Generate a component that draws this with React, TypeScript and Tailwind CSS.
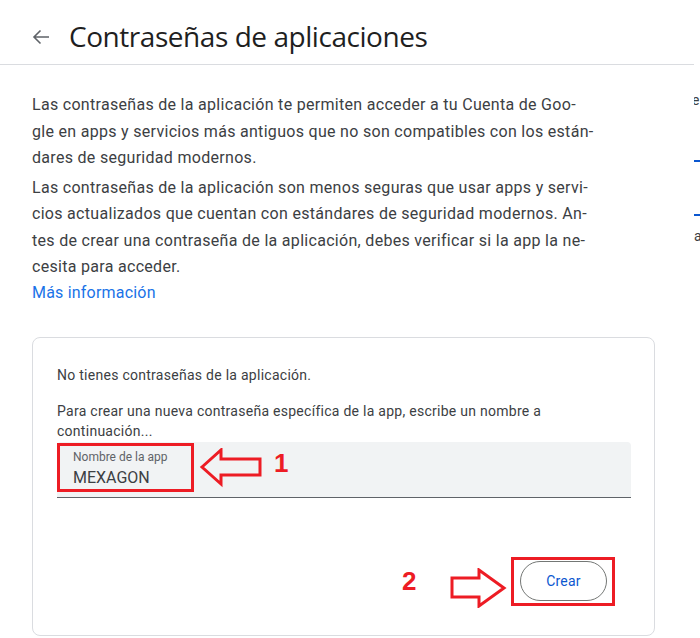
import React from "react";

const body = { fontFamily: "Roboto, 'Noto Sans', Arial, sans-serif" };
const title = { fontFamily: "'Open Sans', Roboto, Arial, sans-serif" };
const mark = { fontFamily: "Arial, 'Liberation Sans', sans-serif" };

export default function App() {
  return (
    <div className="flex w-[700px] h-[638px] overflow-hidden bg-white" style={body}>
      <div className="w-[694px] shrink-0">
        {/* Header */}
        <div className="h-[65px] border-b border-[#dadce0] flex items-center pl-[29px] pt-[10px]">
          <svg width="24" height="24" viewBox="0 0 24 24" className="shrink-0">
            <path d="M20 12H5.5M11.5 5.5L5 12l6.5 6.5" fill="none" stroke="#5f6368" strokeWidth="1.6" />
          </svg>
          <h1 className="ml-[16px] text-[28px] leading-[36px] text-[#1f1f1f] tracking-[-0.45px] -mt-[2px]" style={title}>
            Contraseñas de aplicaciones
          </h1>
        </div>

        {/* Content */}
        <div className="pl-[32px] pr-[20px] pt-[27px] text-[16px] leading-[26.5px] tracking-[0.3px] text-[#3c4043]">
          <p>
            Las contraseñas de la aplicación te permiten acceder a tu Cuenta de Goo-
            <br />
            gle en apps y servicios más antiguos que no son compatibles con los están-
            <br />
            dares de seguridad modernos.
          </p>
          <p className="mt-[3px]">
            Las contraseñas de la aplicación son menos seguras que usar apps y servi-
            <br />
            cios actualizados que cuentan con estándares de seguridad modernos. An-
            <br />
            tes de crear una contraseña de la aplicación, debes verificar si la app la ne-
            <br />
            cesita para acceder.
          </p>
          <a className="block text-[#1a73e8] leading-[24px] tracking-[0.2px]">Más información</a>

          {/* Card */}
          <div className="relative mt-[32px] w-[623px] h-[299px] border border-[#dadce0] rounded-[8px] pl-[24px] pr-[23px] pt-[27px] text-[14px] leading-[20px] tracking-[0.27px] text-[#3c4043]">
            <p>No tienes contraseñas de la aplicación.</p>
            <p className="mt-[16px]">
              Para crear una nueva contraseña específica de la app, escribe un nombre a
              <br />
              continuación...
            </p>
            <div className="mt-[1px] h-[56px] bg-[#f1f3f4] rounded-t-[4px] border-b border-[#5f6368] pl-[16px] pt-[8px] tracking-normal">
              <div className="text-[12px] leading-[14px] text-[#5f6368]">Nombre de la app</div>
              <div className="mt-[4px] text-[16px] leading-[20px] text-[#3c4043]">MEXAGON</div>
            </div>
            <div className="flex justify-end pr-[24px] mt-[63px]">
              <button className="w-[87px] h-[40px] rounded-full border border-[#747775] text-[#0b57d0] text-[14px] tracking-[0.2px]">
                Crear
              </button>
            </div>

            {/* Annotation 1 */}
            <div className="absolute left-[24px] top-[105px] w-[137px] h-[49px] border-[3px] border-[#ed1c24]" />
            <svg className="absolute left-[166px] top-[110px]" width="66" height="40" viewBox="0 0 66 40">
              <polygon
                points="3,19 22,2 22,11 61,11 61,27 22,27 22,36"
                fill="none"
                stroke="#ed1c24"
                strokeWidth="3"
              />
            </svg>
            <div className="absolute left-[241px] top-[110px] text-[26px] leading-[30px] font-bold text-[#ed1c24]" style={mark}>
              1
            </div>

            {/* Annotation 2 */}
            <div className="absolute left-[478px] top-[219px] w-[104px] h-[49px] border-[3px] border-[#ed1c24]" />
            <svg className="absolute left-[416px] top-[230px]" width="60" height="40" viewBox="0 0 60 40">
              <polygon
                points="3,10 30,10 30,2 55,20 30,38 30,29 3,29"
                fill="none"
                stroke="#ed1c24"
                strokeWidth="3"
              />
            </svg>
            <div className="absolute left-[369px] top-[228px] text-[26px] leading-[30px] font-bold text-[#ed1c24]" style={mark}>
              2
            </div>
          </div>
        </div>
      </div>

      {/* Clipped side column */}
      <div className="flex-1 overflow-hidden flex flex-col pt-[92px] text-[14px] leading-[16px] text-[#3c4043]">
        <div className="-ml-[2px]">e</div>
        <div className="mt-[52px] w-[8px] h-[2px] bg-[#0b57d0] shrink-0" />
        <div className="mt-[52px] w-[8px] h-[2px] bg-[#0b57d0] shrink-0" />
        <div className="mt-[12px]">a</div>
      </div>
    </div>
  );
}
